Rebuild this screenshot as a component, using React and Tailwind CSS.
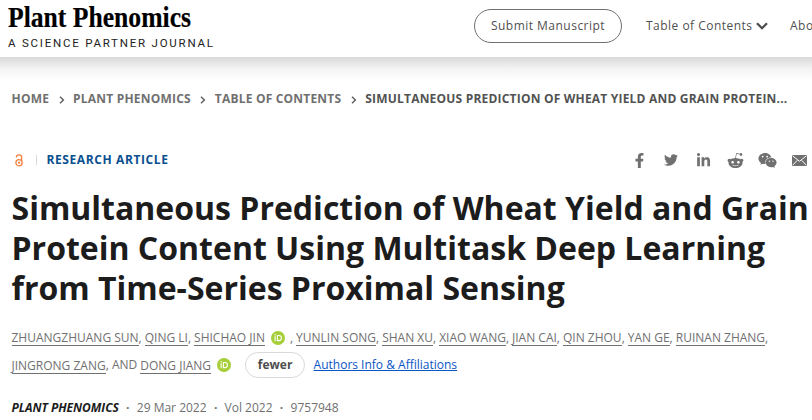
import { FaFacebookF, FaTwitter, FaLinkedinIn, FaRedditAlien, FaWeixin } from "react-icons/fa";

const crumbs = ["Home", "Plant Phenomics", "Table of Contents"];

const authors = [
  { name: "Zhuangzhuang Sun" },
  { name: "Qing Li" },
  { name: "Shichao Jin", orcid: true },
  { name: "Yunlin Song" },
  { name: "Shan Xu" },
  { name: "Xiao Wang" },
  { name: "Jian Cai" },
  { name: "Qin Zhou" },
  { name: "Yan Ge" },
  { name: "Ruinan Zhang" },
];

function Logo() {
  return (
    <svg width="240" height="57" viewBox="0 0 240 57" className="block shrink-0 overflow-visible">
      <text
        x="8"
        y="27"
        textLength="183"
        lengthAdjust="spacingAndGlyphs"
        className="fill-black stroke-black stroke-[0.2px] font-['Liberation_Serif',serif] text-[30px] font-bold"
      >
        Plant Phenomics
      </text>
      <text
        x="8"
        y="46.5"
        textLength="205"
        className="fill-[#222] font-['Roboto',sans-serif] text-[11.5px]"
      >
        A SCIENCE PARTNER JOURNAL
      </text>
    </svg>
  );
}

function Chevron() {
  return (
    <svg width="6" height="8" viewBox="0 0 6 8" className="mt-px block">
      <path d="M1 0.8 4.4 4 1 7.2" fill="none" stroke="#5c5c5c" strokeWidth="1.4" />
    </svg>
  );
}

function OpenAccess() {
  return (
    <svg width="8" height="13" viewBox="0 0 8 13" className="block">
      <g fill="none" stroke="#f47f3c" strokeWidth="1.3">
        <circle cx="4" cy="8.7" r="3.1" />
        <path d="M1.4 3.5V3a2.6 2.2 0 0 1 5.2 0v4" />
      </g>
      <circle cx="4" cy="8.7" r="1.1" fill="#f47f3c" />
    </svg>
  );
}

function Orcid() {
  return (
    <svg width="14" height="14" viewBox="0 0 14 14" className="block">
      <circle cx="7" cy="7" r="7" fill="#a6ce39" />
      <g fill="none" stroke="#fff" strokeWidth="1.1">
        <path d="M4.1 5.2v5M6.4 4.5v5.1h1.5a2.55 2.55 0 0 0 0-5.1z" />
      </g>
      <circle cx="4.1" cy="3.7" r="0.7" fill="#fff" />
    </svg>
  );
}

function Envelope() {
  return (
    <svg width="15" height="11" viewBox="0 0 15 11" className="block">
      <rect width="15" height="11" rx="0.6" fill="#707070" />
      <path d="m.6.8 6.9 5.5L14.4.8M.6 10.3l4.7-5M14.4 10.3l-4.7-5" fill="none" stroke="#fff" />
    </svg>
  );
}

function Author({ name }) {
  return (
    <a href="#" className="block h-[17px] border-b border-[#707070] leading-[17px]">
      {name}
    </a>
  );
}

export default function App() {
  return (
    <div className="h-[420px] w-[812px] overflow-hidden bg-white font-['Open_Sans',sans-serif] text-[#707070]">
      <header className="flex h-[57px] items-start">
        <Logo />
        <nav className="mt-[9px] ml-[234px] flex h-[34px] shrink-0 items-center text-[12px] font-medium tracking-[0.48px] text-[#505050]">
          <a href="#" className="flex h-[34px] w-[148px] items-center justify-center rounded-full border border-[#707070]">
            Submit Manuscript
          </a>
          <a href="#" className="ml-6 flex w-[122px] items-center justify-between whitespace-nowrap">
            Table of Contents
            <svg width="12" height="8" viewBox="0 0 12 8" className="shrink-0">
              <path d="m1 1.2 5 5 5-5" fill="none" stroke="#4a4a4a" strokeWidth="2.2" />
            </svg>
          </a>
          <a href="#" className="ml-[22px]">Abo</a>
        </nav>
      </header>
      <div className="h-[23px] bg-linear-to-b from-[#d9d9d9] via-[#f3f3f3] to-white" />

      <main className="pl-[11.5px]">
        <nav className="flex h-[38px] items-center text-[12px] font-bold tracking-[0.2px] whitespace-nowrap uppercase">
          {crumbs.map((crumb) => (
            <div key={crumb} className="flex items-center">
              <a href="#">{crumb}</a>
              <span className="mr-[8.5px] ml-[9.5px]">
                <Chevron />
              </span>
            </div>
          ))}
          <span className="text-[#525252]">Simultaneous Prediction of Wheat Yield and Grain Protein...</span>
        </nav>

        <div className="mt-[31px] flex h-[22px] items-center">
          <div className="ml-[3px]">
            <OpenAccess />
          </div>
          <span className="ml-[13px] h-[10px] w-px bg-[#d9d9d9]" />
          <span className="ml-[10px] text-[12px] font-bold tracking-[0.6px] text-[#0a4f8f]">RESEARCH ARTICLE</span>
          <div className="ml-auto flex w-[189px] shrink-0 items-center">
            <span className="flex w-8 shrink-0 justify-center"><FaFacebookF size={15} /></span>
            <span className="flex w-8 shrink-0 justify-center"><FaTwitter size={14} /></span>
            <span className="flex w-8 shrink-0 justify-center"><FaLinkedinIn size={15} /></span>
            <span className="flex w-8 shrink-0 justify-center"><FaRedditAlien size={17} /></span>
            <span className="flex w-8 shrink-0 justify-center"><FaWeixin size={19} /></span>
            <span className="flex w-8 shrink-0 justify-center"><Envelope /></span>
          </div>
        </div>

        <h1 className="mt-[17px] text-[32px] leading-10 font-bold whitespace-nowrap text-[#1c1c1c]">
          Simultaneous Prediction of Wheat Yield and Grain
          <br />
          Protein Content Using Multitask Deep Learning
          <br />
          from Time-Series Proximal Sensing
        </h1>

        <div className="mt-[21px] text-[12px] whitespace-nowrap">
          <div className="flex h-[17px] uppercase">
            {authors.map(({ name, orcid }) => (
              <div key={name} className="flex">
                <Author name={name} />
                {orcid ? <span className="mt-[2px] mr-[5px] ml-[6px]"><Orcid /></span> : null}
                <span className="w-[6.15px] leading-[17px]">,</span>
              </div>
            ))}
          </div>
          <div className="mt-[6px] flex h-[26px] items-center">
            <Author name="JINGRONG ZANG" />
            <span className="mr-[3px]">, AND</span>
            <Author name="DONG JIANG" />
            <span className="ml-[6px]"><Orcid /></span>
            <button className="ml-[14px] h-[26px] w-[60px] rounded-full border border-[#d9d9d9] text-[12px] font-bold text-[#4d4d4d]">
              fewer
            </button>
            <a href="#" className="ml-[8.5px] text-[#0a55c4] underline">Authors Info &amp; Affiliations</a>
          </div>
        </div>

        <div className="mt-5 flex h-5 items-center text-[12px] whitespace-nowrap">
          <span className="font-bold tracking-[-0.03px] text-[#1c1c1c] italic">PLANT PHENOMICS</span>
          <span className="w-[18px] text-center font-bold">·</span>
          <span>29 Mar 2022</span>
          <span className="w-[18px] text-center font-bold">·</span>
          <span>Vol 2022</span>
          <span className="w-[18px] text-center font-bold">·</span>
          <span>9757948</span>
        </div>
      </main>
    </div>
  );
}
